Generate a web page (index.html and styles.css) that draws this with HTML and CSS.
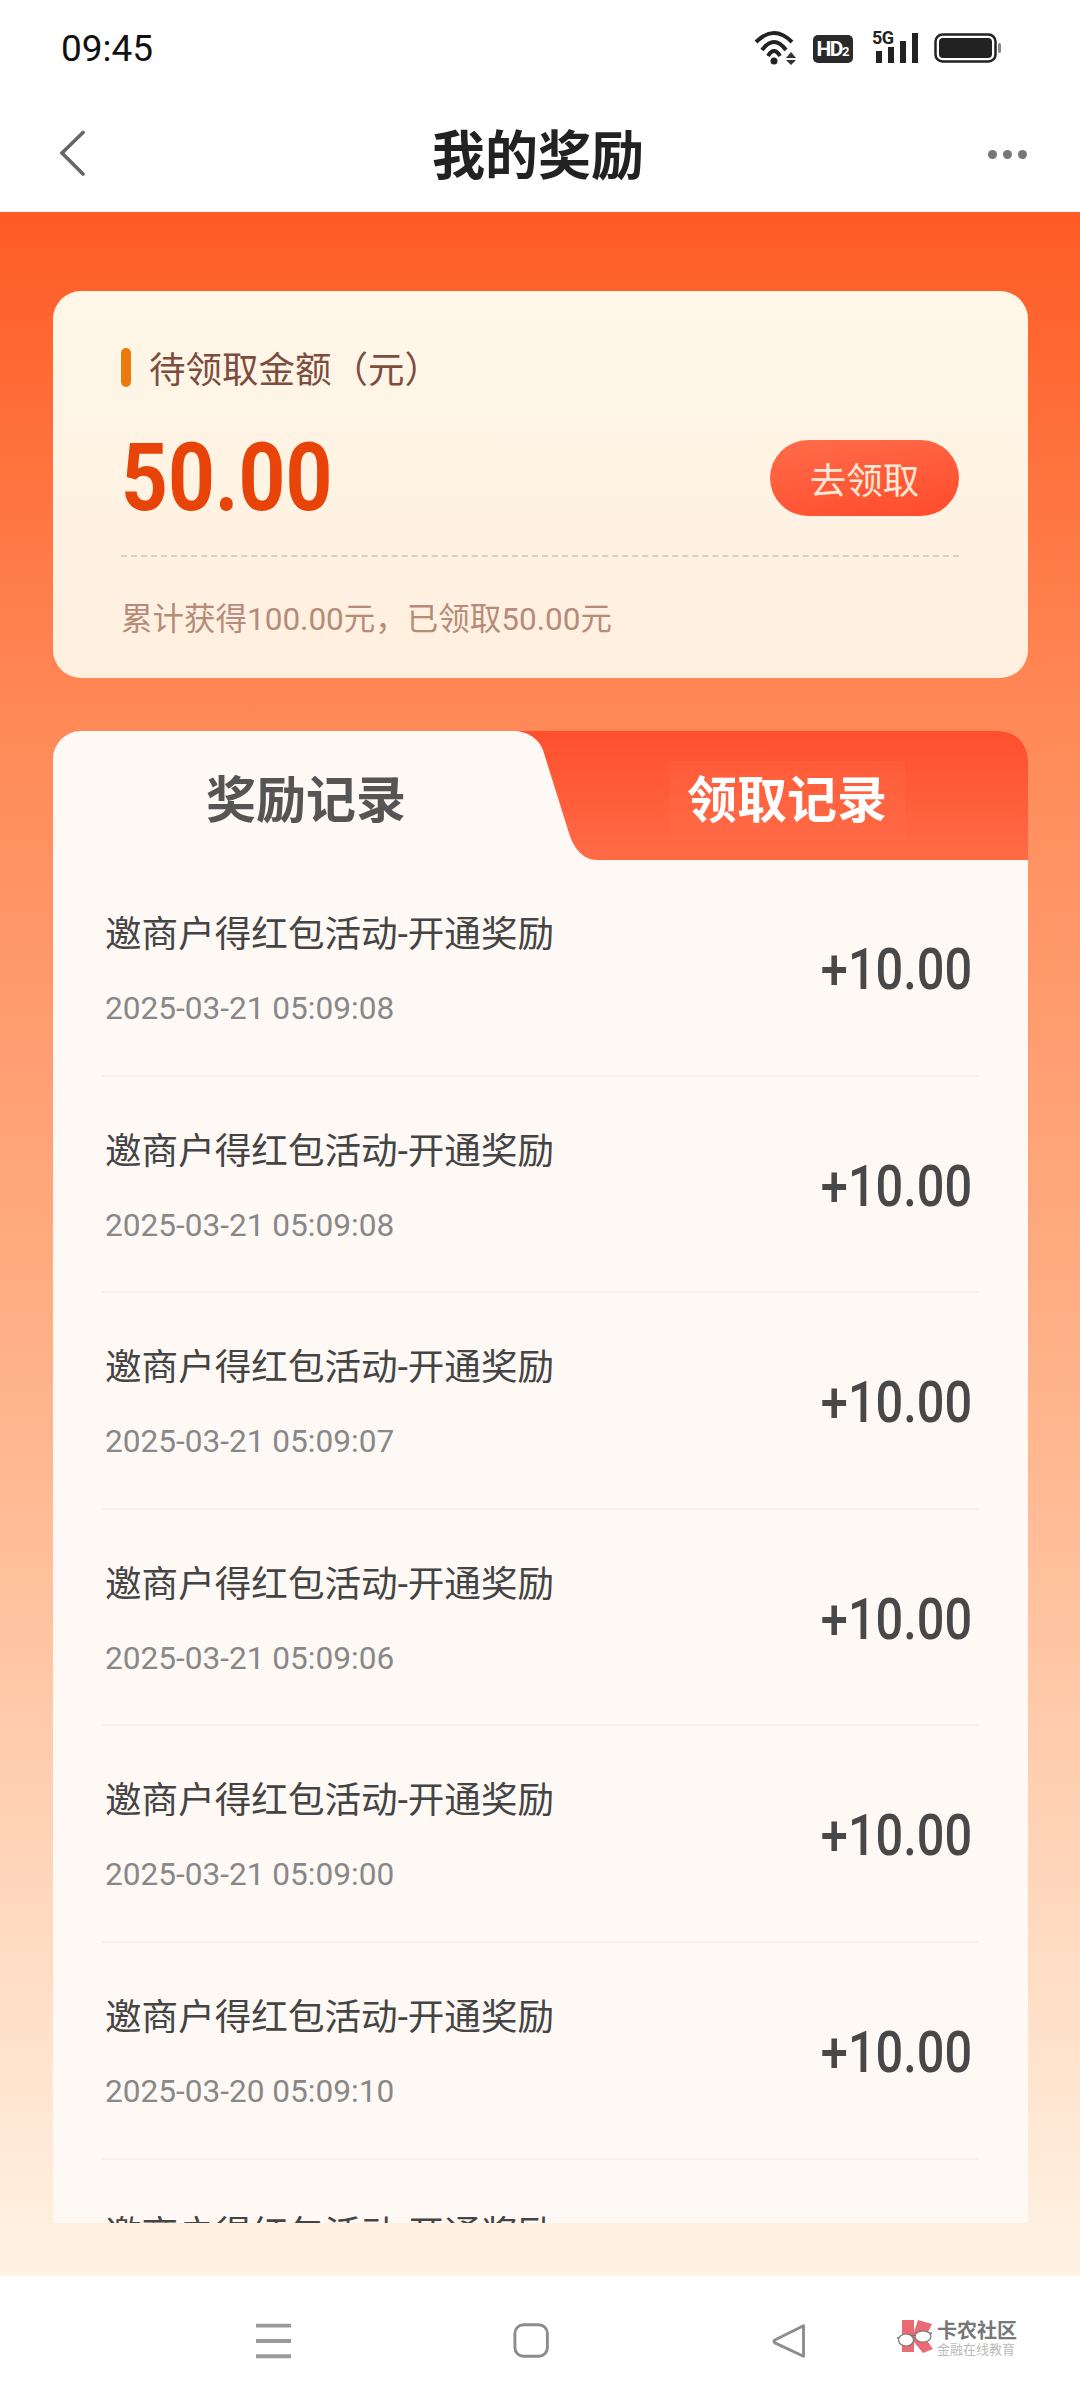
FILE: index.html
```html
<!DOCTYPE html>
<html lang="zh">
<head>
    <meta charset="UTF-8">
    <title>我的奖励</title>
    <link rel="stylesheet" href="styles.css">
</head>
<body>

<div class="status-bar">
    <span class="time">09:45</span>
    <div class="status-icons">
        <svg class="icon-wifi" width="42" height="35" viewBox="0 0 42 35">
            <path d="M2 11 Q20 -7 38 11" fill="none" stroke="#222" stroke-width="4"/>
            <path d="M8 19 Q20 3 32 19" fill="none" stroke="#222" stroke-width="4"/>
            <path d="M14 25 Q20 15 26 25" fill="none" stroke="#222" stroke-width="4"/>
            <circle cx="20" cy="30" r="3.5" fill="#222"/>
            <path d="M32 27 L37 21 L42 27 Z M32 29 L42 29 L37 34 Z" fill="#333"/>
        </svg>
        <span class="hd">HD<small>2</small></span>
        <div class="signal">
            <span class="five-g">5G</span>
            <svg width="46" height="31" viewBox="0 0 46 31">
                <rect x="4" y="19" width="6" height="12" fill="#222"/>
                <rect x="16" y="15" width="6" height="16" fill="#222"/>
                <rect x="28" y="9" width="6" height="22" fill="#222"/>
                <rect x="40" y="1" width="6" height="30" fill="#222"/>
            </svg>
        </div>
        <svg class="battery" width="67" height="30" viewBox="0 0 67 30">
            <rect x="1.5" y="1.5" width="60" height="27" rx="7" fill="none" stroke="#222" stroke-width="2.5"/>
            <rect x="5" y="5" width="53" height="20" rx="4" fill="#222"/>
            <rect x="64" y="10" width="3" height="10" rx="1.5" fill="#888"/>
        </svg>
    </div>
</div>

<div class="title-bar">
    <svg class="back" width="26" height="46" viewBox="0 0 26 46">
        <path d="M24 2.5 L3 23 L24 44" fill="none" stroke="#666" stroke-width="3.6" stroke-linecap="round"/>
    </svg>
    <h1>我的奖励</h1>
    <div class="dots"><i></i><i></i><i></i></div>
</div>

<main class="page">
    <section class="summary">
        <div class="summary-label"><i></i>待领取金额（元）</div>
        <div class="summary-money">
            <span class="amount-big">50.00</span>
            <button class="btn-claim">去领取</button>
        </div>
        <div class="summary-line"></div>
        <p class="summary-foot">累计获得100.00元，已领取50.00元</p>
    </section>

    <section class="records">
        <div class="tabs">
            <svg class="tab-shape" width="545" height="129" viewBox="0 0 545 129">
                <path d="M0 0 H460 C475 0 486 8 490 19 L515 99 C520 117 530 129 544 129 H0 Z" fill="#fff9f6"/>
            </svg>
            <div class="tab tab-on">奖励记录</div>
            <div class="tab tab-off"><span>领取记录</span></div>
        </div>

        <div class="list">
            <div class="row">
                <div><p class="row-title">邀商户得红包活动-开通奖励</p><p class="row-date">2025-03-21 05:09:08</p></div>
                <span class="row-amount">+10.00</span>
            </div>
            <div class="row">
                <div><p class="row-title">邀商户得红包活动-开通奖励</p><p class="row-date">2025-03-21 05:09:08</p></div>
                <span class="row-amount">+10.00</span>
            </div>
            <div class="row">
                <div><p class="row-title">邀商户得红包活动-开通奖励</p><p class="row-date">2025-03-21 05:09:07</p></div>
                <span class="row-amount">+10.00</span>
            </div>
            <div class="row">
                <div><p class="row-title">邀商户得红包活动-开通奖励</p><p class="row-date">2025-03-21 05:09:06</p></div>
                <span class="row-amount">+10.00</span>
            </div>
            <div class="row">
                <div><p class="row-title">邀商户得红包活动-开通奖励</p><p class="row-date">2025-03-21 05:09:00</p></div>
                <span class="row-amount">+10.00</span>
            </div>
            <div class="row">
                <div><p class="row-title">邀商户得红包活动-开通奖励</p><p class="row-date">2025-03-20 05:09:10</p></div>
                <span class="row-amount">+10.00</span>
            </div>
            <div class="row">
                <div><p class="row-title">邀商户得红包活动-开通奖励</p></div>
            </div>
        </div>
    </section>
</main>

<nav class="nav-bar">
    <svg width="37" height="37" viewBox="0 0 37 37">
        <path d="M0 3 H37 M0 19 H37 M0 35 H37" stroke="#9a9a9a" stroke-width="4"/>
    </svg>
    <svg width="38" height="37" viewBox="0 0 38 37">
        <rect x="2" y="2" width="34" height="33" rx="9" fill="none" stroke="#8c8c8c" stroke-width="3"/>
    </svg>
    <svg width="36" height="37" viewBox="0 0 36 37">
        <path d="M33 3 L3 18 Q1 19 3 21 L33 35 Z" fill="none" stroke="#8c8c8c" stroke-width="3" stroke-linejoin="round"/>
    </svg>
    <div class="mark">
        <svg width="36" height="36" viewBox="0 0 36 36">
            <path d="M5 0 H17 V12 L21 0 L35 4 L28 18 L36 29 L26 33 L17 22 V32 H5 Z" fill="#ea6a76"/>
            <path d="M0 18 L35 13" stroke="#777" stroke-width="1.4"/>
            <ellipse cx="9" cy="20" rx="7.5" ry="6" fill="#fff" stroke="#777" stroke-width="1.2"/>
            <ellipse cx="26" cy="16.5" rx="8" ry="5.5" fill="#fff" stroke="#777" stroke-width="1.2"/>
        </svg>
        <div class="mark-text">
            <b>卡农社区</b>
            <span>金融在线教育</span>
        </div>
    </div>
</nav>

</body>
</html>
```

FILE: styles.css
```css
* { box-sizing: border-box; }
html, body { margin: 0; padding: 0; }
body {
    width: 1080px;
    height: 2408px;
    display: flex;
    flex-direction: column;
    overflow: hidden;
    background: #fff;
    font-family: Roboto, "Noto Sans CJK SC", sans-serif;
}
p, h1 { margin: 0; font-weight: normal; }

/* top */
.status-bar {
    height: 96px;
    padding: 28px 79px 0 61px;
    display: flex;
    justify-content: space-between;
    align-items: flex-start;
}
.time { font-size: 37px; line-height: 42px; color: #111; }
.status-icons { display: flex; align-items: flex-start; padding-top: 4px; }
.icon-wifi { margin-top: -1px; }
.battery { margin-top: 1px; }
.hd {
    width: 40px;
    height: 28px;
    margin: 3px 0 0 17px;
    background: #2a2a2a;
    border-radius: 5px;
    color: #fff;
    font-size: 21px;
    font-weight: 700;
    line-height: 28px;
    text-align: center;
    letter-spacing: -1.5px;
}
.hd small { font-size: 13px; letter-spacing: 0; }
.signal { position: relative; width: 46px; margin: 0 16px 0 19px; }
.signal svg { display: block; }
.five-g {
    position: absolute;
    left: 0;
    top: -3px;
    font-size: 18px;
    line-height: 18px;
    font-weight: 700;
    color: #222;
    letter-spacing: -0.5px;
}

.title-bar {
    height: 116px;
    padding: 5px 53px 0 59px;
    display: flex;
    justify-content: space-between;
    align-items: center;
}
.title-bar h1 {
    margin-left: 3px;
    font-size: 53px;
    font-weight: 700;
    color: #222;
    line-height: 60px;
}
.back { margin-bottom: 7px; }
.dots { display: flex; gap: 6px; padding-bottom: 5px; }
.dots i { width: 9px; height: 9px; border-radius: 50%; background: #777; }

/* page */
.page {
    flex: 1;
    min-height: 0;
    padding: 79px 52px 53px 53px;
    display: flex;
    flex-direction: column;
    gap: 53px;
    background: linear-gradient(180deg, #ff5b24 0%, #ff8a58 25%, #ffb78f 60%, #fff3e4 100%);
}

.summary {
    padding: 51px 69px 35px 68px;
    border-radius: 28px;
    background: linear-gradient(180deg, #fff7e8, #ffefdf);
}
.summary-label {
    display: flex;
    align-items: center;
    gap: 18px;
    height: 50px;
    font-size: 36.5px;
    color: #7c4d3e;
}
.summary-label i {
    width: 10px;
    height: 39px;
    border-radius: 5px;
    background: #ea7a0c;
}
.summary-money {
    margin-top: 48px;
    height: 76px;
    display: flex;
    justify-content: space-between;
    align-items: center;
}
.amount-big {
    font-size: 94px;
    font-weight: 700;
    line-height: 76px;
    color: #e8440a;
    transform: scaleX(0.87);
    transform-origin: left center;
}
.btn-claim {
    width: 189px;
    height: 76px;
    border: none;
    border-radius: 38px;
    background: linear-gradient(170deg, #ff6c4a, #ff4b2c);
    color: #ffe9d6;
    font-family: inherit;
    font-size: 36.5px;
}
.summary-line { margin-top: 39px; border-top: 2px dashed #dfcfb9; }
.summary-foot {
    margin-top: 40px;
    font-size: 31.5px;
    line-height: 46px;
    color: #b68b79;
}

/* records */
.records {
    flex: 1;
    min-height: 0;
    overflow: hidden;
    border-radius: 28px 28px 0 0;
    background: #fff9f6;
}
.tabs {
    position: relative;
    height: 129px;
    padding: 10px 13px 0 0;
    display: grid;
    grid-template-columns: 506px 456px;
    align-items: center;
    background: linear-gradient(180deg, #ff4f2d, #ff6b46);
}
.tab-shape { position: absolute; left: 0; top: 0; }
.tab {
    position: relative;
    text-align: center;
    font-size: 50px;
    font-weight: 700;
    line-height: 60px;
}
.tab-on { color: #555; }
.tab-off { color: #fff; }
.tab-off span {
    display: inline-block;
    padding: 10px 18px 9px;
    background: rgba(255, 120, 85, 0.2);
}

.row {
    height: 216.6px;
    margin: 0 49px;
    padding: 51px 7px 0 3px;
    display: flex;
    justify-content: space-between;
    align-items: flex-start;
    border-bottom: 2px solid #f6f0ee;
}
.row-title { font-size: 36.6px; line-height: 48px; color: #444; }
.row-date { margin-top: 28px; font-size: 31.6px; line-height: 44px; color: #888; }
.row-amount {
    margin-top: 28px;
    font-size: 58px;
    font-weight: 500;
    line-height: 60px;
    color: #484848;
    transform: scaleX(0.84);
    transform-origin: right center;
}

/* bottom */
.nav-bar {
    height: 132px;
    padding: 46px 63px 0 256px;
    display: flex;
    align-items: flex-start;
    background: #fff;
}
.nav-bar > svg:nth-child(2) { margin-left: 222px; }
.nav-bar > svg:nth-child(3) { margin-left: 222px; }
.mark { display: flex; gap: 4px; margin-left: 91px; margin-top: -2px; }
.mark-text { display: flex; flex-direction: column; }
.mark-text b { font-size: 20px; line-height: 22px; color: #777; white-space: nowrap; }
.mark-text span { font-size: 13px; line-height: 14px; color: #bbb; white-space: nowrap; margin-top: 1px; }
```
